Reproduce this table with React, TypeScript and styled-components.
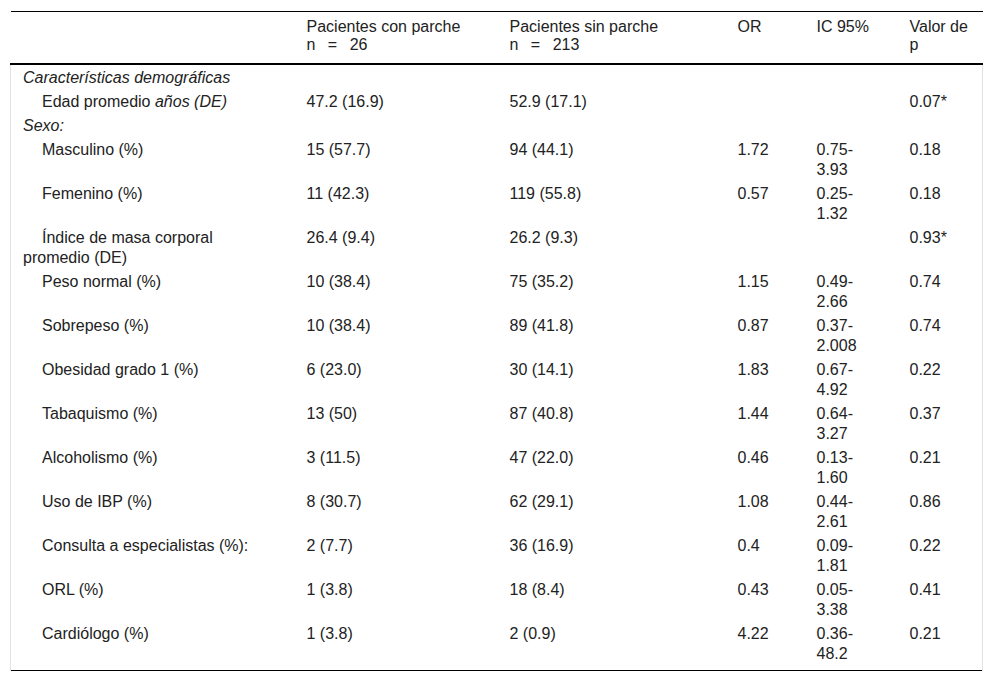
import React from "react";
import styled, { createGlobalStyle } from "styled-components";

const Global = createGlobalStyle`
  html, body { margin: 0; padding: 0; background: #fff; }
  body { font-family: "Liberation Sans", Arial, sans-serif; color: #222; }
`;

const Page = styled.div`
  padding: 11px 10px 0 10px;
`;

const Table = styled.table`
  width: 972px;
  table-layout: fixed;
  border-collapse: collapse;
  font-size: 16px;
`;

const HeadRow = styled.tr`
  border-top: 1px solid #000;
  border-bottom: 2px solid #000;
`;

const HeadCell = styled.th<{ $first?: boolean; $pr?: number }>`
  text-align: left;
  font-weight: normal;
  vertical-align: top;
  line-height: 18px;
  padding: 6px ${(p) => p.$pr ?? 6}px 9px ${(p) => (p.$first ? 12 : 6)}px;
`;

const Row = styled.tr<{ $last?: boolean }>`
  ${(p) => (p.$last ? "border-bottom: 1px solid #000;" : "")}
  & > td:first-child { border-left: 1px solid #e2e2e2; }
  & > td:last-child { border-right: 1px solid #e2e2e2; }
  ${(p) => (p.$last ? "& > td { padding-bottom: 6px; }" : "")}
`;

const Cell = styled.td<{ $first?: boolean; $indent?: boolean; $italic?: boolean; $pr?: number }>`
  vertical-align: top;
  line-height: 20px;
  padding: 3px ${(p) => p.$pr ?? 6}px 1px ${(p) => (p.$first ? 12 : 6)}px;
  text-indent: ${(p) => (p.$indent ? "19px" : "0")};
  font-style: ${(p) => (p.$italic ? "italic" : "normal")};
`;

const Em = styled.span`
  font-style: italic;
`;

type R = {
  label: React.ReactNode;
  indent?: boolean;
  italic?: boolean;
  a?: string;
  b?: string;
  or?: string;
  ic?: string;
  p?: string;
};

const rows: R[] = [
  { label: "Características demográficas", italic: true },
  {
    label: (
      <>
        Edad promedio <Em>años (DE)</Em>
      </>
    ),
    indent: true,
    a: "47.2 (16.9)",
    b: "52.9 (17.1)",
    p: "0.07*",
  },
  { label: "Sexo:", italic: true },
  { label: "Masculino (%)", indent: true, a: "15 (57.7)", b: "94 (44.1)", or: "1.72", ic: "0.75-3.93", p: "0.18" },
  { label: "Femenino (%)", indent: true, a: "11 (42.3)", b: "119 (55.8)", or: "0.57", ic: "0.25-1.32", p: "0.18" },
  { label: "Índice de masa corporal promedio (DE)", indent: true, a: "26.4 (9.4)", b: "26.2 (9.3)", p: "0.93*" },
  { label: "Peso normal (%)", indent: true, a: "10 (38.4)", b: "75 (35.2)", or: "1.15", ic: "0.49-2.66", p: "0.74" },
  { label: "Sobrepeso (%)", indent: true, a: "10 (38.4)", b: "89 (41.8)", or: "0.87", ic: "0.37-2.008", p: "0.74" },
  { label: "Obesidad grado 1 (%)", indent: true, a: "6 (23.0)", b: "30 (14.1)", or: "1.83", ic: "0.67-4.92", p: "0.22" },
  { label: "Tabaquismo (%)", indent: true, a: "13 (50)", b: "87 (40.8)", or: "1.44", ic: "0.64-3.27", p: "0.37" },
  { label: "Alcoholismo (%)", indent: true, a: "3 (11.5)", b: "47 (22.0)", or: "0.46", ic: "0.13-1.60", p: "0.21" },
  { label: "Uso de IBP (%)", indent: true, a: "8 (30.7)", b: "62 (29.1)", or: "1.08", ic: "0.44-2.61", p: "0.86" },
  { label: "Consulta a especialistas (%):", indent: true, a: "2 (7.7)", b: "36 (16.9)", or: "0.4", ic: "0.09-1.81", p: "0.22" },
  { label: "ORL (%)", indent: true, a: "1 (3.8)", b: "18 (8.4)", or: "0.43", ic: "0.05-3.38", p: "0.41" },
  { label: "Cardiólogo (%)", indent: true, a: "1 (3.8)", b: "2 (0.9)", or: "4.22", ic: "0.36-48.2", p: "0.21" },
];

export default function App() {
  return (
    <Page>
      <Global />
      <Table>
        <colgroup>
          <col style={{ width: 290 }} />
          <col style={{ width: 203 }} />
          <col style={{ width: 228 }} />
          <col style={{ width: 79 }} />
          <col style={{ width: 93 }} />
          <col style={{ width: 79 }} />
        </colgroup>
        <thead>
          <HeadRow>
            <HeadCell $first $pr={40}></HeadCell>
            <HeadCell>
              Pacientes con parche
              <br />
              n{"\u00a0\u2002"}={"\u00a0\u2002"}26
            </HeadCell>
            <HeadCell>
              Pacientes sin parche
              <br />
              n{"\u00a0\u2002"}={"\u00a0\u2002"}213
            </HeadCell>
            <HeadCell>OR</HeadCell>
            <HeadCell $pr={30}>IC 95%</HeadCell>
            <HeadCell $pr={7}>Valor de p</HeadCell>
          </HeadRow>
        </thead>
        <tbody>
          {rows.map((r, i) => (
            <Row key={i} $last={i === rows.length - 1}>
              <Cell $first $pr={40} $indent={r.indent} $italic={r.italic}>
                {r.label}
              </Cell>
              <Cell>{r.a}</Cell>
              <Cell>{r.b}</Cell>
              <Cell>{r.or}</Cell>
              <Cell $pr={30}>{r.ic}</Cell>
              <Cell $pr={7}>{r.p}</Cell>
            </Row>
          ))}
        </tbody>
      </Table>
    </Page>
  );
}
